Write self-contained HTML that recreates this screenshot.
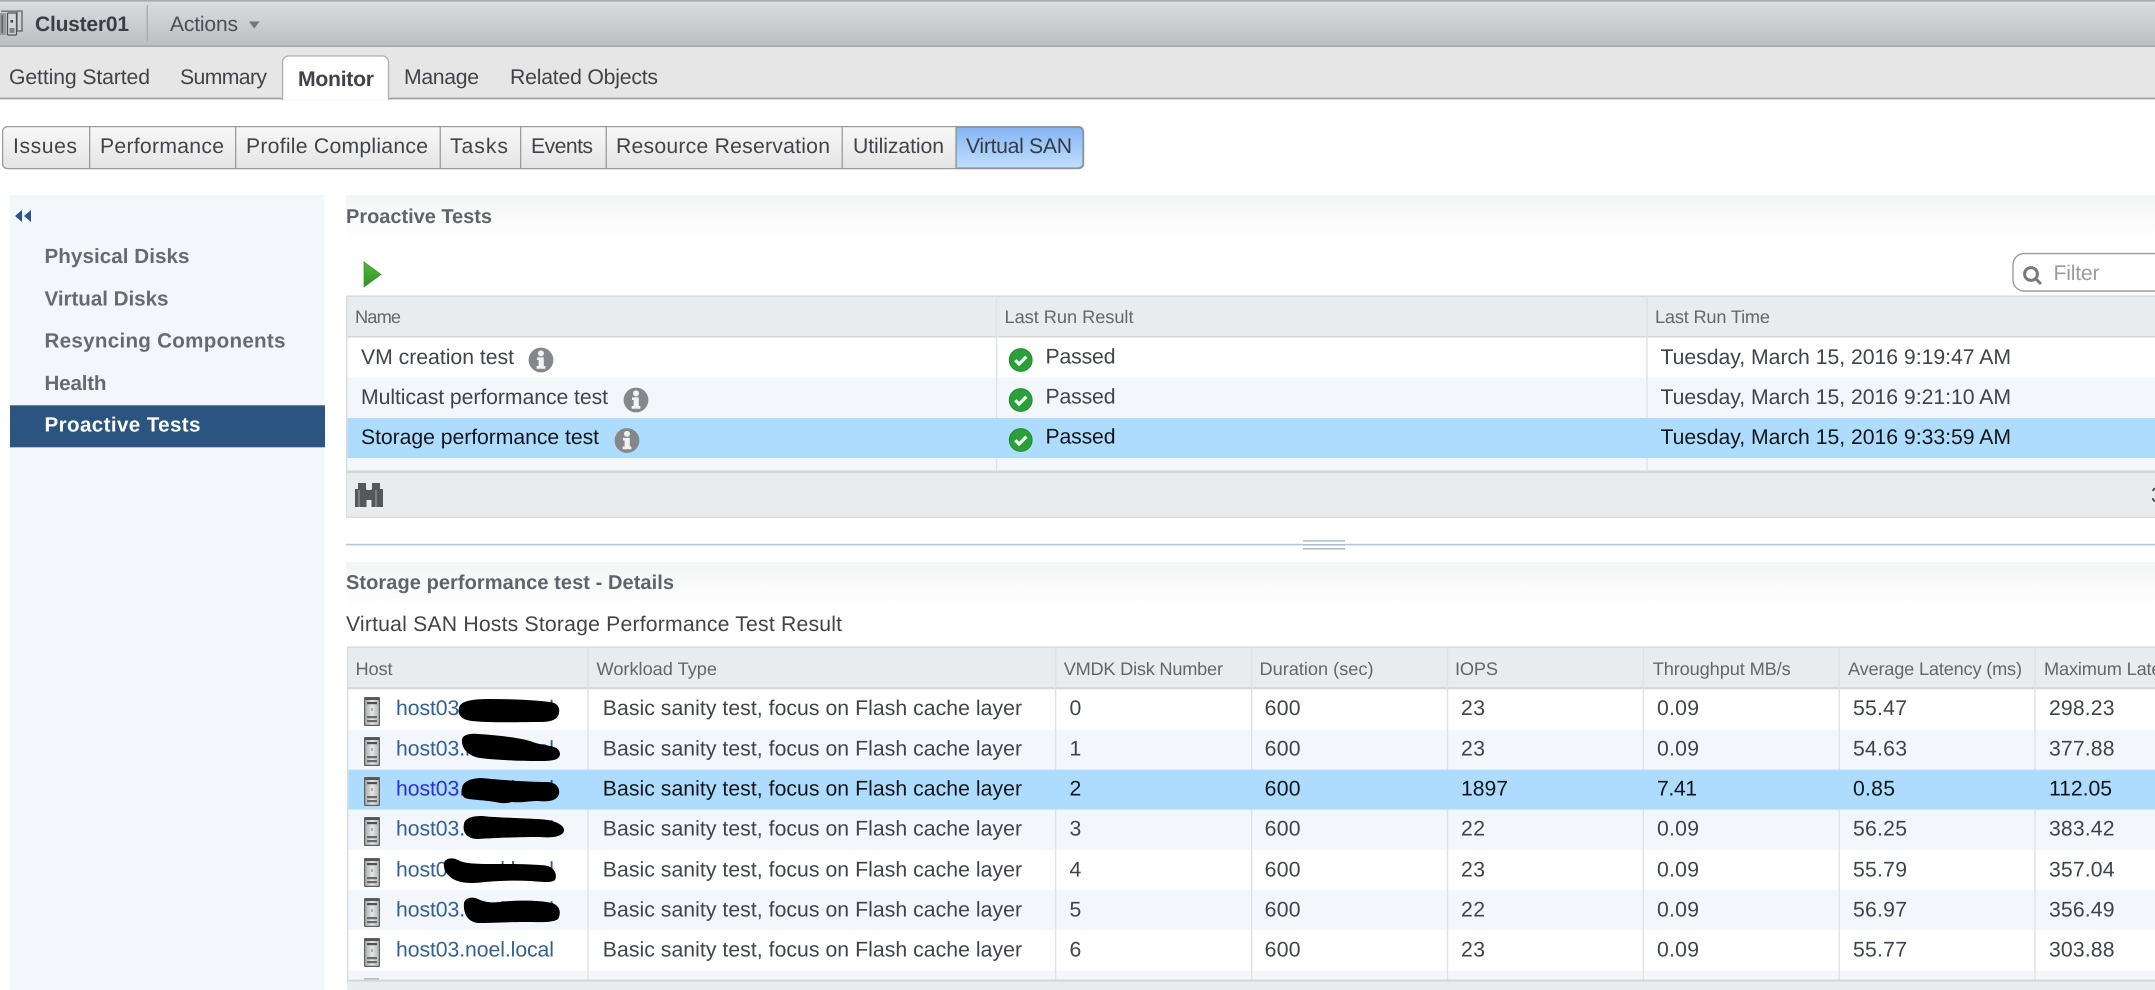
<!DOCTYPE html>
<html lang="en"><head><meta charset="utf-8"><title>Cluster01 - Monitor</title>
<style>
html,body{margin:0;padding:0;background:#fff;width:2155px;height:990px;overflow:hidden}
svg{display:block;filter:blur(.3px)}
text{font-family:"Liberation Sans",Arial,sans-serif;font-size:21.2px;fill:#444a50;white-space:pre;text-rendering:geometricPrecision}
.b{font-weight:bold}
.nav{font-weight:bold;font-size:20.6px;fill:#666b72}
.h{font-size:18.2px;fill:#62676d}
.t{fill:#3f444a}
.s{fill:#10151c}
.l{fill:#33608f}
.sep{stroke:#dfe2e6;stroke-width:1.4}
</style></head><body>
<svg xmlns="http://www.w3.org/2000/svg" width="2155" height="990" viewBox="0 0 2155 990">
<defs>
<linearGradient id="top" x1="0" y1="0" x2="0" y2="1"><stop offset="0" stop-color="#dcdde1"/><stop offset="1" stop-color="#bcbdc0"/></linearGradient>
<linearGradient id="btn" x1="0" y1="0" x2="0" y2="1"><stop offset="0" stop-color="#f8f8f8"/><stop offset="1" stop-color="#e4e4e4"/></linearGradient>
<linearGradient id="sel" x1="0" y1="0" x2="0" y2="1"><stop offset="0" stop-color="#86b5f4"/><stop offset="1" stop-color="#c0dffd"/></linearGradient>
<linearGradient id="band" x1="0" y1="0" x2="0" y2="1"><stop offset="0" stop-color="#f4f5f5"/><stop offset="1" stop-color="#ffffff"/></linearGradient>
<linearGradient id="play" x1="0" y1="0" x2="0" y2="1"><stop offset="0" stop-color="#58bb3a"/><stop offset="1" stop-color="#2c8f26"/></linearGradient>
<linearGradient id="srv" x1="0" y1="0" x2="1" y2="0"><stop offset="0" stop-color="#a5a7a8"/><stop offset=".5" stop-color="#e6e7e7"/><stop offset="1" stop-color="#b0b1b2"/></linearGradient>
<g id="info"><circle r="12.4" fill="#85878a"/><circle cy="-6.6" r="3" fill="#f2f2f2"/><path d="M-4 -2.6H2.8V6H4.4V8.8H-4.4V6H-2.4V0H-4Z" fill="#f2f2f2"/></g>
<g id="ok"><circle r="11.4" fill="#2ba03a"/><circle r="11.4" fill="none" stroke="#1e8a2c" stroke-width="1"/><path d="M-5.4 .2L-1.6 4L5.6 -3.2" fill="none" stroke="#f4fbf4" stroke-width="3.2"/></g>
<g id="host">
<rect x=".6" y=".6" width="14.8" height="27.8" rx=".8" fill="url(#srv)" stroke="#5c5e60" stroke-width="1.2"/>
<rect x="1" y="1" width="14" height="2" fill="#55575a"/>
<rect x="3" y="5" width="10" height="2.2" fill="#4e5053"/>
<rect x="7.4" y="11" width="1.2" height="3" fill="#8a8a8a"/>
<rect x="3" y="19" width="10" height="2.2" fill="#686a6c"/>
<rect x="3" y="23" width="10" height="2.2" fill="#686a6c"/>
</g>
</defs>

<!-- top bar -->
<rect width="2155" height="46" fill="url(#top)"/>
<rect width="2155" height="1.6" fill="#a9abae"/>
<rect y="45.4" width="2155" height="1.6" fill="#a6a7aa"/>
<g>
<rect x="0" y="13" width="6" height="22" fill="#97999b"/>
<rect x="1.5" y="15" width="1.4" height="18" fill="#5c5e60"/>
<rect x="17" y="11" width="5" height="20" fill="#cfd0d1" stroke="#55585a" stroke-width="1.2"/>
<rect x="7.5" y="13" width="9" height="22" rx="1" fill="#d5d6d7" stroke="#4e5052" stroke-width="1.3"/>
<rect x="9.5" y="28" width="5" height="5" fill="#808284"/>
<rect x="10.5" y="20" width="2.6" height="2.6" fill="#44474a"/>
<rect x="1" y="10.4" width="21" height="1.6" fill="#7a7c7e"/>
</g>
<text x="35" y="31" class="b" textLength="94" style="font-size:21px;fill:#3a3f45">Cluster01</text>
<rect x="146.5" y="5" width="1.4" height="36" fill="#a8aaad"/>
<text x="170" y="31" textLength="68" style="font-size:21px;fill:#4a4f55">Actions</text>
<path d="M249 21.5H259.5L254.2 28.5Z" fill="#72767b"/>

<!-- tab row -->
<rect y="47" width="2155" height="51" fill="#e6e6e6"/>
<rect y="97.6" width="2155" height="1.8" fill="#a3a3a3"/>
<path d="M282.6 99.5V62a6 6 0 0 1 6-6H382.5a6 6 0 0 1 6 6V99.5Z" fill="#fff" stroke="#b0b0b0" stroke-width="1.3"/>
<rect x="283.4" y="97" width="104.4" height="3" fill="#fff"/>
<text x="9" y="84" textLength="141" class="t">Getting Started</text>
<text x="180" y="84" textLength="87" class="t">Summary</text>
<text x="298" y="86" textLength="76" class="b" style="fill:#3f444a">Monitor</text>
<text x="404" y="84" textLength="75" class="t">Manage</text>
<text x="510" y="84" textLength="148" class="t">Related Objects</text>

<!-- button bar -->
<rect x="2.6" y="126.6" width="1081" height="42" rx="5" fill="url(#btn)" stroke="#9a9c9e" stroke-width="1.3"/>
<path d="M956 127.2H1078a5 5 0 0 1 5 5V163a5 5 0 0 1 -5 5H956Z" fill="url(#sel)" stroke="#8193a8" stroke-width="1.3"/>
<g fill="#9a9c9e"><rect x="89" y="127" width="1.3" height="41"/><rect x="235" y="127" width="1.3" height="41"/><rect x="439.6" y="127" width="1.3" height="41"/><rect x="520" y="127" width="1.3" height="41"/><rect x="605.6" y="127" width="1.3" height="41"/><rect x="841.6" y="127" width="1.3" height="41"/><rect x="955.6" y="127" width="1.3" height="41"/></g>
<text x="13" y="153" textLength="64" class="t">Issues</text>
<text x="100" y="153" textLength="124" class="t">Performance</text>
<text x="246" y="153" textLength="182" class="t">Profile Compliance</text>
<text x="450" y="153" textLength="58" class="t">Tasks</text>
<text x="531" y="153" textLength="62" class="t">Events</text>
<text x="616" y="153" textLength="214" class="t">Resource Reservation</text>
<text x="853" y="153" textLength="91" class="t">Utilization</text>
<text x="966" y="153" textLength="106" class="t" style="fill:#333b48">Virtual SAN</text>

<!-- sidebar -->
<rect x="9.6" y="195" width="314.6" height="795" fill="#f3f6fb"/>
<path d="M15 216L22 210V222ZM24 216L31 210V222Z" fill="#27568c"/>
<text x="44.5" y="263" textLength="145" class="nav">Physical Disks</text>
<text x="44.5" y="305.5" textLength="124" class="nav">Virtual Disks</text>
<text x="44.5" y="347.5" textLength="241" class="nav">Resyncing Components</text>
<text x="44.5" y="390" textLength="62" class="nav">Health</text>
<rect x="10" y="405.3" width="315" height="42" fill="#2b5580"/>
<text x="44.5" y="431.7" textLength="156" class="nav" style="fill:#fff">Proactive Tests</text>

<!-- Proactive Tests section -->
<rect x="346" y="195" width="1809" height="46" fill="url(#band)"/>
<text x="346" y="223" textLength="146" class="b" style="font-size:20px;fill:#5f646a">Proactive Tests</text>
<path d="M364 262L381 274.5L364 287Z" fill="url(#play)" stroke="#3a9d2d" stroke-width=".8"/>
<rect x="2013" y="253.6" width="160" height="37.4" rx="11" fill="#fff" stroke="#9b9da0" stroke-width="1.4"/>
<circle cx="2031" cy="274" r="6.4" fill="none" stroke="#777a7d" stroke-width="3"/>
<path d="M2036 279L2041 284" stroke="#777a7d" stroke-width="3"/>
<text x="2053.5" y="280" textLength="46" style="fill:#9a9c9f">Filter</text>

<!-- table 1 -->
<rect x="346.5" y="296" width="1810" height="41" fill="#e9ecef"/>
<rect x="346.5" y="295.4" width="1810" height="1.6" fill="#d9dbdd"/>
<rect x="346.5" y="336" width="1810" height="1.6" fill="#d4d6d8"/>
<rect x="347" y="337.5" width="1810" height="40" fill="#fff"/>
<rect x="347" y="377.6" width="1810" height="40.4" fill="#f3f6fb"/>
<rect x="347" y="418" width="1810" height="40" fill="#aedcfe"/>
<rect x="347" y="458" width="1810" height="13" fill="#f3f6fb"/>
<rect x="346" y="296" width="1.5" height="221" fill="#dcdee0"/>
<path d="M996.5 296V418M996.5 458V471M1647 296V418M1647 458V471" class="sep"/>
<rect x="346.5" y="470.5" width="1810" height="2.6" fill="#d5d6d8"/>
<rect x="347" y="473" width="1810" height="44" fill="#e9ecef"/>
<rect x="346.5" y="516.4" width="1810" height="1.6" fill="#d9dbdd"/>
<text x="355" y="323" textLength="46" class="h">Name</text>
<text x="1004.5" y="323" textLength="129" class="h">Last Run Result</text>
<text x="1655" y="323" textLength="115" class="h">Last Run Time</text>
<text x="361" y="364" textLength="153" class="t">VM creation test</text>
<text x="361" y="404" textLength="247" class="t">Multicast performance test</text>
<text x="361" y="444" textLength="238" class="s">Storage performance test</text>
<use href="#info" x="541" y="360"/><use href="#info" x="636" y="400"/><use href="#info" x="627" y="440.5"/>
<use href="#ok" x="1020.7" y="360"/><use href="#ok" x="1020.7" y="400"/><use href="#ok" x="1020.7" y="440"/>
<text x="1045.5" y="363.5" textLength="70" class="t">Passed</text>
<text x="1045.5" y="403.5" textLength="70" class="t">Passed</text>
<text x="1045.5" y="443.5" textLength="70" class="s">Passed</text>
<text x="1660.5" y="364" textLength="350.5" class="t">Tuesday, March 15, 2016 9:19:47 AM</text>
<text x="1660.5" y="404" textLength="350.5" class="t">Tuesday, March 15, 2016 9:21:10 AM</text>
<text x="1660.5" y="444" textLength="350.5" class="s">Tuesday, March 15, 2016 9:33:59 AM</text>
<g fill="#55585b">
<rect x="358" y="483" width="8" height="6"/><rect x="372" y="483" width="8" height="6"/>
<rect x="355" y="489" width="11.5" height="18"/><rect x="371.5" y="489" width="11.5" height="18"/>
<rect x="366" y="490" width="6" height="10"/>
</g>
<rect x="358" y="490" width="2" height="17" fill="#7d8083"/><rect x="375" y="490" width="2" height="17" fill="#7d8083"/>
<text x="2151" y="502" style="fill:#444">3</text>

<!-- splitter -->
<rect x="346" y="543.8" width="1809" height="1.6" fill="#b5c7dd"/>
<rect x="1303" y="539.8" width="42" height="9.4" fill="#fff"/>
<g fill="#adbfd3"><rect x="1303" y="540" width="42" height="1.6"/><rect x="1303" y="544" width="42" height="1.6"/><rect x="1303" y="548" width="42" height="1.6"/></g>

<!-- details -->
<rect x="346" y="562" width="1809" height="48" fill="url(#band)"/>
<text x="346" y="589" textLength="328" class="b" style="font-size:20px;fill:#5f646a">Storage performance test - Details</text>
<text x="346" y="631" textLength="496" class="t">Virtual SAN Hosts Storage Performance Test Result</text>

<!-- table 2 -->
<rect x="347" y="647" width="1808" height="42" fill="#e9ecef"/>
<rect x="347" y="646.4" width="1808" height="1.6" fill="#d9dbdd"/>
<rect x="347" y="687" width="1808" height="2.4" fill="#d6d8da"/>
<rect x="347.5" y="689.4" width="1808" height="40.6" fill="#fff"/>
<rect x="347.5" y="730" width="1808" height="39.6" fill="#f3f6fb"/>
<rect x="347.5" y="769.6" width="1808" height="40" fill="#aedcfe"/>
<rect x="347.5" y="809.6" width="1808" height="40.4" fill="#f3f6fb"/>
<rect x="347.5" y="850" width="1808" height="40" fill="#fff"/>
<rect x="347.5" y="890" width="1808" height="40" fill="#f3f6fb"/>
<rect x="347.5" y="930" width="1808" height="40.7" fill="#fff"/>
<rect x="347.5" y="970.7" width="1808" height="10" fill="#f3f6fb"/>
<rect x="347" y="647" width="1.5" height="343" fill="#dcdee0"/>
<path d="M588 647V769.6M588 809.6V980M1055.6 647V769.6M1055.6 809.6V980M1251.7 647V769.6M1251.7 809.6V980M1447.5 647V769.6M1447.5 809.6V980M1643.4 647V769.6M1643.4 809.6V980M1839.2 647V769.6M1839.2 809.6V980M2035 647V769.6M2035 809.6V980" class="sep"/>
<rect x="347" y="979.6" width="1808" height="2.2" fill="#d3d5d7"/>
<rect x="347" y="981.8" width="1808" height="8.2" fill="#e9ecef"/>

<text x="355.5" y="675" textLength="37" class="h">Host</text>
<text x="596.5" y="675" textLength="120.5" class="h">Workload Type</text>
<text x="1063.7" y="675" textLength="159.3" class="h">VMDK Disk Number</text>
<text x="1259.5" y="675" textLength="114" class="h">Duration (sec)</text>
<text x="1455" y="675" textLength="43" class="h">IOPS</text>
<text x="1652.7" y="675" textLength="138" class="h">Throughput MB/s</text>
<text x="1848" y="675" textLength="174" class="h">Average Latency (ms)</text>
<text x="2044" y="675" class="h" textLength="186">Maximum Latency (ms)</text>

<use href="#host" x="364" y="697"/><use href="#host" x="364" y="737"/><use href="#host" x="364" y="777"/><use href="#host" x="364" y="817"/><use href="#host" x="364" y="858"/><use href="#host" x="364" y="898"/><use href="#host" x="364" y="938"/>
<rect x="364" y="978" width="15" height="1.6" fill="#bbb"/>

<text x="396" y="715" textLength="158" class="l">host03.noel.local</text>
<text x="396" y="755.7" textLength="158" class="l">host03.noel.local</text>
<text x="396" y="795.7" textLength="158" style="fill:#2a2fd6">host03.noel.local</text>
<text x="396" y="835.7" textLength="158" class="l">host03.noel.local</text>
<text x="396" y="876.7" textLength="158" class="l">host03.noel.local</text>
<text x="396" y="916.7" textLength="158" class="l">host03.noel.local</text>
<text x="396" y="956.7" textLength="158" class="l">host03.noel.local</text>

<g fill="#000">
<path d="M459 708C460 701 472 699 490 699C512 699 535 700 550 702C558 703 560 708 559 713C558 720 550 722 540 722C520 722 490 723 472 721C462 720 457 715 459 708Z"/>
<path d="M462 739C463 735 470 733 478 734C495 735 515 737 530 741C540 745 548 745 554 747C560 749 561 754 559 757C556 761 548 761 538 761C520 761 495 760 480 758C468 756 461 748 462 739Z"/>
<path d="M462 788C463 781 472 778 482 778C500 780 530 782 548 782C557 783 560 788 559 794C557 801 548 802 538 801C528 801 522 803 512 802C505 804 500 803 495 802C485 800 470 800 465 798C461 795 461 792 462 788Z"/>
<path d="M464 824C465 818 472 816 482 816C500 818 530 818 548 820C559 822 565 827 564 831C562 837 552 838 540 837C520 837 495 838 478 839C467 839 462 832 464 824Z"/>
<path d="M444 863C445 858 453 857 458 860C463 863 472 864 490 864C515 864 535 864 548 866C556 869 557 876 555 880C551 883 544 882 530 881C515 880 500 881 485 882C470 884 460 883 453 879C447 875 443 870 444 863Z"/>
<path d="M464 903C465 898 472 896 478 899C484 902 490 903 500 902C515 900 540 900 552 903C561 906 561 914 558 919C553 923 540 922 525 922C510 922 490 923 478 923C467 922 463 912 464 903Z"/>
</g>

<g>
<text x="602.8" y="715" textLength="419.2" class="t">Basic sanity test, focus on Flash cache layer</text>
<text x="602.8" y="755.7" textLength="419.2" class="t">Basic sanity test, focus on Flash cache layer</text>
<text x="602.8" y="795.7" textLength="419.2" class="s">Basic sanity test, focus on Flash cache layer</text>
<text x="602.8" y="835.7" textLength="419.2" class="t">Basic sanity test, focus on Flash cache layer</text>
<text x="602.8" y="876.7" textLength="419.2" class="t">Basic sanity test, focus on Flash cache layer</text>
<text x="602.8" y="916.7" textLength="419.2" class="t">Basic sanity test, focus on Flash cache layer</text>
<text x="602.8" y="956.7" textLength="419.2" class="t">Basic sanity test, focus on Flash cache layer</text>
</g>

<g>
<text x="1069.5" y="715" class="t">0</text><text x="1264.6" y="715" textLength="36" class="t">600</text><text x="1461" y="715" textLength="24" class="t">23</text><text x="1657" y="715" textLength="42" class="t">0.09</text><text x="1853" y="715" textLength="54" class="t">55.47</text><text x="2049" y="715" textLength="65.5" class="t">298.23</text>
<text x="1069.5" y="755.7" class="t">1</text><text x="1264.6" y="755.7" textLength="36" class="t">600</text><text x="1461" y="755.7" textLength="24" class="t">23</text><text x="1657" y="755.7" textLength="42" class="t">0.09</text><text x="1853" y="755.7" textLength="54" class="t">54.63</text><text x="2049" y="755.7" textLength="65.5" class="t">377.88</text>
<text x="1069.5" y="795.7" class="s">2</text><text x="1264.6" y="795.7" textLength="36" class="s">600</text><text x="1461" y="795.7" textLength="47" class="s">1897</text><text x="1657" y="795.7" textLength="40" class="s">7.41</text><text x="1853" y="795.7" textLength="42" class="s">0.85</text><text x="2049" y="795.7" textLength="63" class="s">112.05</text>
<text x="1069.5" y="835.7" class="t">3</text><text x="1264.6" y="835.7" textLength="36" class="t">600</text><text x="1461" y="835.7" textLength="24" class="t">22</text><text x="1657" y="835.7" textLength="42" class="t">0.09</text><text x="1853" y="835.7" textLength="54" class="t">56.25</text><text x="2049" y="835.7" textLength="65.5" class="t">383.42</text>
<text x="1069.5" y="876.7" class="t">4</text><text x="1264.6" y="876.7" textLength="36" class="t">600</text><text x="1461" y="876.7" textLength="24" class="t">23</text><text x="1657" y="876.7" textLength="42" class="t">0.09</text><text x="1853" y="876.7" textLength="54" class="t">55.79</text><text x="2049" y="876.7" textLength="65.5" class="t">357.04</text>
<text x="1069.5" y="916.7" class="t">5</text><text x="1264.6" y="916.7" textLength="36" class="t">600</text><text x="1461" y="916.7" textLength="24" class="t">22</text><text x="1657" y="916.7" textLength="42" class="t">0.09</text><text x="1853" y="916.7" textLength="54" class="t">56.97</text><text x="2049" y="916.7" textLength="65.5" class="t">356.49</text>
<text x="1069.5" y="956.7" class="t">6</text><text x="1264.6" y="956.7" textLength="36" class="t">600</text><text x="1461" y="956.7" textLength="24" class="t">23</text><text x="1657" y="956.7" textLength="42" class="t">0.09</text><text x="1853" y="956.7" textLength="54" class="t">55.77</text><text x="2049" y="956.7" textLength="65.5" class="t">303.88</text>
</g>
</svg>
</body></html>
